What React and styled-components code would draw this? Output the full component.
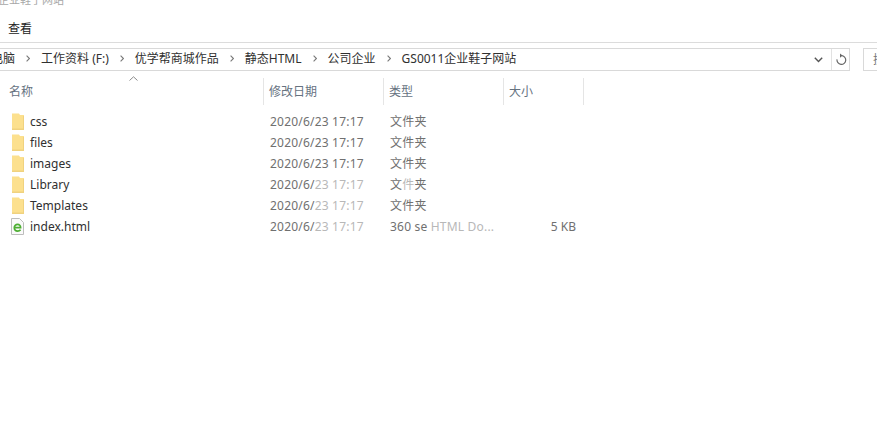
import React from "react";
import styled, { createGlobalStyle } from "styled-components";

const Global = createGlobalStyle`
  html, body { margin: 0; padding: 0; background: #fff; }
  body { font-family: "Noto Sans", "Noto Sans CJK SC", sans-serif; font-size: 12px; color: #2b2b2b; }
`;

const Page = styled.div`
  width: 877px;
  height: 426px;
  overflow: hidden;
  background: #fff;
`;

const TitleBar = styled.div`
  height: 8px;
  overflow: hidden;
  color: #a8a8a8;
  font-size: 11px;
  margin-left: -2px;
  white-space: nowrap;
  & > span { display: block; margin-top: -6px; line-height: 12px; }
`;

const Ribbon = styled.div`
  height: 35px;
  box-sizing: border-box;
  padding: 13px 0 0 8px;
  line-height: 16px;
  border-bottom: 1px solid #dcdcdc;
  color: #222;
`;

const AddressRow = styled.div`
  display: flex;
  margin-top: 5px;
  height: 23px;
`;

const AddressBox = styled.div`
  width: 850px;
  box-sizing: border-box;
  border: 1px solid #d9d9d9;
  border-left: 0;
  display: flex;
  align-items: center;
  overflow: hidden;
`;

const Crumbs = styled.div`
  flex: 1;
  display: flex;
  align-items: center;
  margin-left: -9px;
  padding-bottom: 2px;
  white-space: nowrap;
  color: #303030;
`;

const Crumb = styled.span`
  line-height: 16px;
`;

const Sep = styled.svg`
  width: 4px;
  height: 7px;
  margin: 0 11px;
  flex: none;
`;

const Dropdown = styled.div`
  width: 18px;
  margin-right: 4px;
  display: flex;
  justify-content: center;
`;

const Refresh = styled.div`
  width: 17px;
  height: 21px;
  border-left: 1px solid #e2e2e2;
  display: flex;
  align-items: center;
  justify-content: center;
`;

const SearchBox = styled.div`
  margin-left: 13px;
  flex: 1;
  box-sizing: border-box;
  border: 1px solid #d9d9d9;
  border-right: 0;
  padding-left: 9px;
  line-height: 21px;
  color: #777;
  overflow: hidden;
  white-space: nowrap;
`;

const Table = styled.div`
  display: grid;
  grid-template-columns: 264px 120px 120px 80px;
`;

const HeadCell = styled.div`
  position: relative;
  height: 27px;
  margin-top: 7px;
  box-sizing: border-box;
  padding-left: ${(p) => p.$pad || 5}px;
  line-height: 27px;
  border-right: 1px solid #e5e5e5;
  color: #66727f;
  white-space: nowrap;
`;

const SortArrow = styled.svg`
  position: absolute;
  left: 129px;
  top: -2px;
  width: 9px;
  height: 5px;
`;

const Rows = styled.div`
  grid-column: 1 / -1;
  display: grid;
  grid-template-columns: 264px 120px 120px 80px;
  grid-auto-rows: 21px;
  padding-top: 6px;
`;

const NameCell = styled.div`
  display: flex;
  align-items: center;
  padding-left: ${(p) => p.$pad || 12}px;
  color: #303030;
`;

const IconWrap = styled.svg`
  width: ${(p) => p.$w}px;
  height: 17px;
  margin-right: ${(p) => p.$gap}px;
  flex: none;
`;

const Cell = styled.div`
  padding-left: 6px;
  line-height: 21px;
  color: #707070;
  white-space: pre;
  letter-spacing: 0.2px;
`;

const SizeCell = styled.div`
  line-height: 21px;
  text-align: right;
  padding-right: 8px;
  color: #707070;
`;

const Faint = styled.span`
  color: #b8b8b8;
`;

const Chevron = () => (
  <Sep viewBox="0 0 4 7">
    <path d="M.6.6 3.4 3.5.6 6.4" fill="none" stroke="#7a7a7a" strokeWidth="1.1" />
  </Sep>
);

const FolderIcon = () => (
  <IconWrap viewBox="0 0 12 17" $w={12} $gap={6}>
    <path d="M0 .5h7l1 1.5h4v15H0z" fill="#fce08e" />
    <path d="M11 3h1v14h-1zM0 15.5h12V17H0z" fill="#f0d27f" />
  </IconWrap>
);

const HtmlIcon = () => (
  <IconWrap viewBox="0 0 13 17" $w={13} $gap={6}>
    <path d="M.5.5h8l4 4v12H.5z" fill="#fafafa" stroke="#bdbdbd" />
    <path
      d="M3.4 9.6h6.2C9.6 7.6 8.3 6.4 6.6 6.4 4.7 6.4 3.3 7.9 3.3 9.8s1.4 3.3 3.4 3.3c1.2 0 2.2-.5 2.9-1.3"
      fill="none"
      stroke="#4dae32"
      strokeWidth="1.7"
    />
  </IconWrap>
);

const folders = [
  { name: "css" },
  { name: "files" },
  { name: "images" },
  { name: "Library", faint: true, faintType: true },
  { name: "Templates", faint: true },
];

const DateText = ({ faint }) =>
  faint ? (
    <Cell>
      2020/6/<Faint>23 17:17</Faint>
    </Cell>
  ) : (
    <Cell>2020/6/23 17:17</Cell>
  );

export default function App() {
  return (
    <Page>
      <Global />
      <TitleBar>
        <span>企业鞋子网站</span>
      </TitleBar>
      <Ribbon>查看</Ribbon>
      <AddressRow>
        <AddressBox>
          <Crumbs>
            <Crumb>电脑</Crumb>
            <Chevron />
            <Crumb>工作资料 (F:)</Crumb>
            <Chevron />
            <Crumb>优学帮商城作品</Crumb>
            <Chevron />
            <Crumb>静态HTML</Crumb>
            <Chevron />
            <Crumb>公司企业</Crumb>
            <Chevron />
            <Crumb>GS0011企业鞋子网站</Crumb>
          </Crumbs>
          <Dropdown>
            <svg width="9" height="6" viewBox="0 0 9 6">
              <path d="M.8.8 4.5 4.6 8.2.8" fill="none" stroke="#555" strokeWidth="1.4" />
            </svg>
          </Dropdown>
          <Refresh>
            <svg width="12" height="13" viewBox="0 0 12 13">
              <path d="M6.5 2.6A4.4 4.4 0 1 1 2 6.4" fill="none" stroke="#666" strokeWidth="1.2" />
              <path d="M5 .4 7.6 2.6 5 4.8z" fill="#666" />
            </svg>
          </Refresh>
        </AddressBox>
        <SearchBox>搜索</SearchBox>
      </AddressRow>
      <Table>
        <HeadCell $pad={9}>
          名称
          <SortArrow viewBox="0 0 9 5">
            <path d="M.5 4.5 4.5.8l4 3.7" fill="none" stroke="#8b8b8b" />
          </SortArrow>
        </HeadCell>
        <HeadCell>修改日期</HeadCell>
        <HeadCell>类型</HeadCell>
        <HeadCell>大小</HeadCell>
        <Rows>
          {folders.map((f) => (
            <React.Fragment key={f.name}>
              <NameCell>
                <FolderIcon />
                {f.name}
              </NameCell>
              <DateText faint={f.faint} />
              <Cell>
                {f.faintType ? (
                  <>
                    文<Faint>件</Faint>夹
                  </>
                ) : (
                  "文件夹"
                )}
              </Cell>
              <SizeCell />
            </React.Fragment>
          ))}
          <NameCell $pad={11}>
            <HtmlIcon />
            index.html
          </NameCell>
          <DateText faint />
          <Cell>
            360 se <Faint>HTML Do...</Faint>
          </Cell>
          <SizeCell>5 KB</SizeCell>
        </Rows>
      </Table>
    </Page>
  );
}
